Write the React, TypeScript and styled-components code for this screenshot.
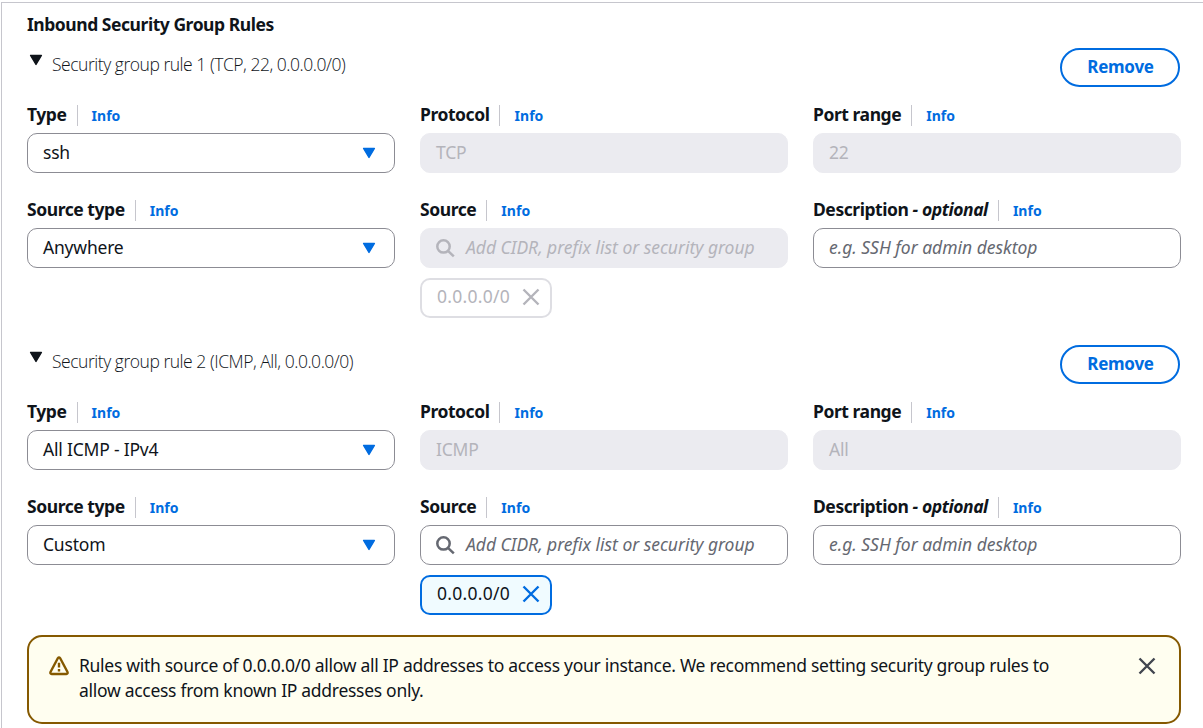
import React from "react";
import styled, { createGlobalStyle } from "styled-components";

const Global = createGlobalStyle`
  *, *::before, *::after { box-sizing: border-box; }
  body {
    margin: 0;
    background: #fff;
    color: #0f141a;
    font-family: "Noto Sans", "Open Sans", sans-serif;
    font-size: 17.5px;
    line-height: 25px;
    letter-spacing: -0.29px;
    overflow: hidden;
  }
`;

const Page = styled.main`
  padding: 2px 0 0 1px;
  height: 728px;
  overflow: hidden;
`;

const Panel = styled.section`
  height: 740px;
  border-top: 1px solid #c6c6cd;
  border-left: 1px solid #c6c6cd;
  padding: 0 22px 0 25px;
`;

const Title = styled.h2`
  margin: 0;
  height: 45px;
  padding-top: 9px;
  font-size: 17.5px;
  font-weight: 700;
  letter-spacing: -0.46px;
  white-space: nowrap;
`;

const Rule = styled.section<{ $gap: number }>`
  margin-bottom: ${(p) => p.$gap}px;
`;

const RuleHeader = styled.header`
  display: flex;
  justify-content: space-between;
  align-items: flex-start;
  height: 57px;
  padding-right: 1px;
`;

const RuleToggle = styled.div`
  display: flex;
  align-items: flex-start;
  gap: 9px;
  padding: 3px 0 0 2px;
  font-family: "Open Sans", "Noto Sans", sans-serif;
  font-weight: 300;
  letter-spacing: -0.47px;
  white-space: nowrap;
  svg { margin-top: 3px; }
`;

const RuleTitle = styled.span`
  padding-top: 1px;
`;

const RemoveButton = styled.button`
  width: 120px;
  height: 39px;
  border: 2px solid #006ce0;
  border-radius: 20px;
  background: #fff;
  color: #006ce0;
  font: 700 17px/25px "Noto Sans", sans-serif;
  letter-spacing: -0.25px;
  padding: 0 0 2px 1px;
`;

const Fields = styled.div`
  display: grid;
  grid-template-columns: repeat(3, 368px);
  column-gap: 25px;
  row-gap: 27px;
`;

const LabelRow = styled.div`
  display: flex;
  height: 28px;
  white-space: nowrap;
`;

const Label = styled.label`
  font-weight: 700;
  letter-spacing: -0.44px;
  margin-top: -3px;
`;

const InfoLink = styled.a`
  height: 21px;
  margin-left: 10px;
  padding-left: 14px;
  border-left: 1px solid #c6c6cd;
  color: #006ce0;
  font-size: 14px;
  font-weight: 700;
  line-height: 21px;
  letter-spacing: 0.05px;
`;

const Control = styled.div<{ $disabled?: boolean }>`
  display: flex;
  align-items: center;
  height: 40px;
  padding: 0 18px 1px 15px;
  border: 1px solid ${(p) => (p.$disabled ? "#ebebf0" : "#8c8c94")};
  border-radius: 10px;
  background: ${(p) => (p.$disabled ? "#ebebf0" : "#fff")};
  color: ${(p) => (p.$disabled ? "#b4b4bb" : "#0f141a")};
  letter-spacing: -0.2px;
  white-space: nowrap;
`;

const Value = styled.span`
  flex: 1;
`;

const Placeholder = styled.span<{ $disabled?: boolean }>`
  color: ${(p) => (p.$disabled ? "#b4b4bb" : "#656871")};
  font-style: italic;
  letter-spacing: -0.02px;
`;

const Token = styled.div<{ $disabled?: boolean }>`
  display: flex;
  align-items: center;
  justify-content: space-between;
  width: 132px;
  height: 40px;
  margin-top: 10px;
  padding: 0 10px 2px 15px;
  border: 2px solid ${(p) => (p.$disabled ? "#dedee3" : "#006ce0")};
  border-radius: 10px;
  background: ${(p) => (p.$disabled ? "#fff" : "#f0fbff")};
  color: ${(p) => (p.$disabled ? "#b4b4bb" : "#0f141a")};
`;

const TokenText = styled.span`
  margin-top: -1px;
  letter-spacing: 0.26px;
`;

const Alert = styled.aside`
  display: flex;
  align-items: flex-start;
  height: 89px;
  padding: 16px 23px 0 20px;
  border: 2px solid #855900;
  border-radius: 15px;
  background: #fffef0;
`;

const AlertText = styled.p`
  flex: 1;
  margin: 0 0 0 10px;
  white-space: nowrap;
`;

const AlertIcon = styled.svg`
  margin-top: 3px;
`;

const CloseIcon = styled.svg`
  margin-top: 4px;
`;

const SearchGlyph = styled.svg`
  margin-right: 10px;
`;

const Caret = ({ color }: { color: string }) => (
  <svg width="14" height="12" viewBox="0 0 14 12">
    <path d="M1.6 1.4H12.4L7 10.4Z" fill={color} stroke={color} strokeWidth="1.4" strokeLinejoin="round" />
  </svg>
);

const SearchIcon = ({ color }: { color: string }) => (
  <SearchGlyph width="20" height="20" viewBox="0 0 20 20" fill="none" stroke={color} strokeWidth="2.5">
    <circle cx="7.5" cy="8.4" r="6.2" />
    <path d="M12 12.9L17.8 18.4" />
  </SearchGlyph>
);

const Cross = ({ color }: { color: string }) => (
  <svg width="18" height="18" viewBox="0 0 18 18" fill="none" stroke={color} strokeWidth="2.4">
    <path d="M1.5 1.5L16.5 16.5M16.5 1.5L1.5 16.5" />
  </svg>
);

type FieldProps = { label: React.ReactNode; children: React.ReactNode };
const Field = ({ label, children }: FieldProps) => (
  <div>
    <LabelRow>
      <Label>{label}</Label>
      <InfoLink>Info</InfoLink>
    </LabelRow>
    {children}
  </div>
);

const Select = ({ value }: { value: string }) => (
  <Control>
    <Value>{value}</Value>
    <Caret color="#006ce0" />
  </Control>
);

type RuleData = {
  title: string;
  type: string;
  protocol: string;
  port: string;
  sourceType: string;
  locked: boolean;
  gap: number;
};

const rules: RuleData[] = [
  { title: "Security group rule 1 (TCP, 22, 0.0.0.0/0)", type: "ssh", protocol: "TCP", port: "22", sourceType: "Anywhere", locked: true, gap: 27 },
  { title: "Security group rule 2 (ICMP, All, 0.0.0.0/0)", type: "All ICMP - IPv4", protocol: "ICMP", port: "All", sourceType: "Custom", locked: false, gap: 20 },
];

const SecurityRule = ({ rule }: { rule: RuleData }) => (
  <Rule $gap={rule.gap}>
    <RuleHeader>
      <RuleToggle>
        <Caret color="#0f141a" />
        <RuleTitle>{rule.title}</RuleTitle>
      </RuleToggle>
      <RemoveButton>Remove</RemoveButton>
    </RuleHeader>
    <Fields>
      <Field label="Type"><Select value={rule.type} /></Field>
      <Field label="Protocol"><Control $disabled>{rule.protocol}</Control></Field>
      <Field label="Port range"><Control $disabled>{rule.port}</Control></Field>
      <Field label="Source type"><Select value={rule.sourceType} /></Field>
      <Field label="Source">
        <Control $disabled={rule.locked}>
          <SearchIcon color={rule.locked ? "#b4b4bb" : "#656871"} />
          <Placeholder $disabled={rule.locked}>Add CIDR, prefix list or security group</Placeholder>
        </Control>
        <Token $disabled={rule.locked}>
          <TokenText>0.0.0.0/0</TokenText>
          <Cross color={rule.locked ? "#b4b4bb" : "#006ce0"} />
        </Token>
      </Field>
      <Field label={<>Description <i>- optional</i></>}>
        <Control><Placeholder>e.g. SSH for admin desktop</Placeholder></Control>
      </Field>
    </Fields>
  </Rule>
);

export default function App() {
  return (
    <Page>
      <Global />
      <Panel>
        <Title>Inbound Security Group Rules</Title>
        {rules.map((rule) => <SecurityRule key={rule.title} rule={rule} />)}
        <Alert>
          <AlertIcon width="20" height="20" viewBox="0 0 20 20" fill="none" stroke="#855900" strokeWidth="2.4">
            <path d="M8.8 2.2L1.5 16Q1 18 2.6 18H17.4Q19 18 18.5 16L11.2 2.2Q10 .9 8.8 2.2Z" strokeLinejoin="round" />
            <path d="M10 6.8V11.6M10 13V15.4" />
          </AlertIcon>
          <AlertText>
            Rules with source of 0.0.0.0/0 allow all IP addresses to access your instance. We recommend setting security group rules to
            <br />
            allow access from known IP addresses only.
          </AlertText>
          <CloseIcon width="18" height="18" viewBox="0 0 18 18" fill="none" stroke="#424650" strokeWidth="2.4">
            <path d="M1.5 1.5L16.5 16.5M16.5 1.5L1.5 16.5" />
          </CloseIcon>
        </Alert>
      </Panel>
    </Page>
  );
}
